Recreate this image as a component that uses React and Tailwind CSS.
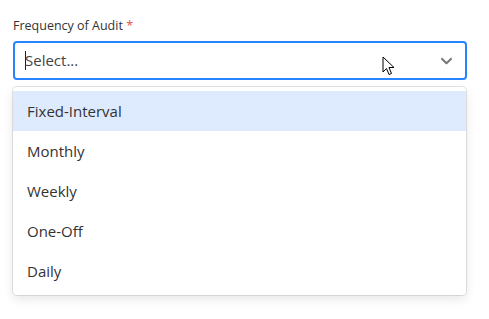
import React from "react";

const options = ["Fixed-Interval", "Monthly", "Weekly", "One-Off", "Daily"];

export default function App() {
  return (
    <div
      className="w-[489px] h-[319px] bg-white px-[13px] pt-[17px]"
      style={{ fontFamily: '"Open Sans", "Noto Sans", sans-serif' }}
    >
      <label className="block text-[12.5px] leading-[18px] text-[#333] mb-[6px]">
        Frequency of Audit <span className="text-[#e5534b]">*</span>
      </label>

      <div className="relative flex items-center h-[39px] w-[454px] rounded-[4px] border-2 border-[#2684ff] bg-white">
        <div className="flex-1 flex items-center pl-[10px] text-[15px] text-[#444]">
          <span className="w-px h-[19px] bg-[#222] mr-[-1px]" />
          <span>Select...</span>
        </div>
        <div className="w-[38px] flex items-center justify-center text-[#7a7a7a]">
          <svg width="19" height="19" viewBox="0 0 20 20" fill="currentColor">
            <path d="M4.516 7.548c0.436-0.446 1.043-0.481 1.576 0l3.908 3.747 3.908-3.747c0.533-0.481 1.141-0.446 1.574 0 0.436 0.445 0.408 1.197 0 1.615-0.406 0.418-4.695 4.502-4.695 4.502-0.217 0.223-0.502 0.335-0.787 0.335s-0.57-0.112-0.789-0.335c0 0-4.287-4.084-4.695-4.502s-0.436-1.17 0-1.615z" />
          </svg>
        </div>
        <svg
          className="absolute left-[367px] top-[13px]"
          width="14"
          height="22"
          viewBox="0 0 14 22"
        >
          <path
            d="M1 1 L1 16 L4.5 12.5 L7 18.5 L9.5 17.5 L7 11.5 L12 11.5 Z"
            fill="white"
            stroke="black"
            strokeWidth="1"
            strokeLinejoin="miter"
          />
        </svg>
      </div>

      <div className="mt-[7px] w-[453px] rounded-[4px] bg-white py-[4px] shadow-[0_0_0_1px_rgba(0,0,0,0.1),0_4px_11px_rgba(0,0,0,0.1)]">
        {options.map((o, i) => (
          <div
            key={o}
            className={
              "h-[40px] flex items-center pl-[14px] text-[15px] text-[#333] " +
              (i === 0 ? "bg-[#deebff]" : "")
            }
          >
            {o}
          </div>
        ))}
      </div>
    </div>
  );
}
